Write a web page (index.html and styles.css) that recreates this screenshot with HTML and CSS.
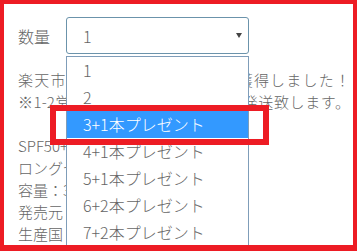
FILE: index.html
```html
<!DOCTYPE html>
<html lang="ja">
<head>
  <meta charset="UTF-8" />
  <meta name="viewport" content="width=device-width, initial-scale=1.0"/>
  <title>数量選択</title>
  <link rel="stylesheet" href="styles.css">
</head>
<body>

  <div class="frame">
    <div class="qty-row">
      <label class="qty-label" for="qty">数量</label>
      <div class="select" id="qty">
        <span>1</span>
        <span class="caret"></span>
      </div>
    </div>

    <div class="desc">
      <p class="line fill">楽天市場ランキングで第1位を獲得しました！</p>
      <p class="line fill">※1-2営業日以内（土日除く）に発送致します。</p>
      <p class="line">&nbsp;</p>
      <p class="line">SPF50+ PA++++</p>
      <p class="line">ロングセラー</p>
      <p class="line">容量：30g</p>
      <p class="line">発売元：株式会社</p>
      <p class="line">生産国：日本</p>
    </div>

    <!-- lista aberta do select -->
    <ul class="options">
      <li>1</li>
      <li>2</li>
      <li class="active">3+1本プレゼント</li>
      <li>4+1本プレゼント</li>
      <li>5+1本プレゼント</li>
      <li>6+2本プレゼント</li>
      <li>7+2本プレゼント</li>
    </ul>

    <div class="callout"></div>
  </div>

</body>
</html>
```

FILE: styles.css
```css
body {
  margin: 0;
  padding: 0;
  background: #fff;
  font-family: "Noto Sans CJK JP", "Noto Sans", sans-serif;
  font-weight: 300;
  color: #666;
}

.frame {
  position: relative;
  box-sizing: border-box;
  width: 357px;
  height: 251px;
  border: solid #ed1c24;
  border-width: 4px 4px 6px 4px;
  padding: 13px 3px 0 14px;
  overflow: hidden;
  background: #fff;
}

.qty-row {
  display: flex;
  align-items: center;
  height: 37px;
}

.qty-label {
  width: 48px;
  font-size: 16px;
  color: #666;
}

.select {
  box-sizing: border-box;
  width: 183px;
  height: 37px;
  border: 1px solid #6b93ab;
  border-radius: 3px;
  padding: 0 6px 0 16px;
  display: flex;
  align-items: center;
  font-size: 16px;
  color: #666;
}

.caret {
  margin-left: auto;
  width: 0;
  height: 0;
  border-left: 3px solid transparent;
  border-right: 3px solid transparent;
  border-top: 5px solid #444;
}

.desc {
  margin-top: 15px;
  font-size: 15px;
  line-height: 22px;
}

.line {
  margin: 0;
  white-space: nowrap;
}

.fill {
  text-align: justify;
  text-align-last: justify;
}

.options {
  position: absolute;
  left: 62px;
  top: 52px;
  box-sizing: border-box;
  width: 183px;
  margin: 0;
  padding: 0;
  list-style: none;
  background: #fff;
  border: 1px solid #7f9db9;
  font-size: 16px;
  color: #666;
}

.options li {
  height: 27px;
  line-height: 27px;
  padding-left: 16px;
}

.options li.active {
  background: #3399ff;
  color: #fff;
}

.callout {
  position: absolute;
  left: 46px;
  top: 101px;
  box-sizing: border-box;
  width: 219px;
  height: 40px;
  border: 6px solid #ed1c24;
}
```
